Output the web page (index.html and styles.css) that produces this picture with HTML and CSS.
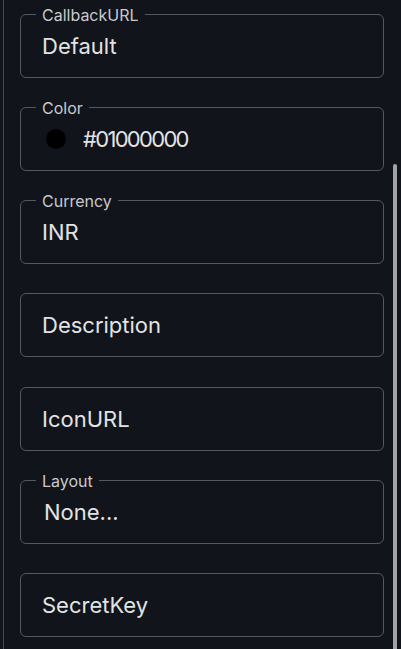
FILE: index.html
```html
<!DOCTYPE html>
<html lang="en">
<head>
  <meta charset="UTF-8" />
  <meta name="viewport" content="width=device-width, initial-scale=1.0"/>
  <title>Settings</title>
  <link rel="stylesheet" href="styles.css">
</head>
<body>
  <div class="panel">
    <div class="fields">
      <div class="field">
        <span class="label">CallbackURL</span>
        <span class="value">Default</span>
      </div>
      <div class="field">
        <span class="label">Color</span>
        <span class="swatch"></span>
        <span class="value hex">#01000000</span>
      </div>
      <div class="field">
        <span class="label">Currency</span>
        <span class="value">INR</span>
      </div>
      <div class="field">
        <span class="value">Description</span>
      </div>
      <div class="field">
        <span class="value">IconURL</span>
      </div>
      <div class="field select">
        <span class="label">Layout</span>
        <span class="value">None...</span>
      </div>
      <div class="field">
        <span class="value">SecretKey</span>
      </div>
    </div>
    <div class="track">
      <div class="thumb"></div>
    </div>
  </div>
</body>
</html>
```

FILE: styles.css
```css
* {
  margin: 0;
  padding: 0;
  box-sizing: border-box;
  font-family: Inter, 'Noto Sans', sans-serif;
}
html, body {
  height: 100%;
  overflow: hidden;
}
body {
  background: #11141b;
}
.panel {
  display: flex;
  height: 100%;
  margin-left: 3px;
  border-left: 1px solid #45474c;
}
.fields {
  width: 380px;
  padding: 14px 0 0 16px;
  display: flex;
  flex-direction: column;
  gap: 29.17px;
}
.field {
  position: relative;
  flex: none;
  height: 64px;
  border: 1px solid #55585d;
  border-radius: 6px;
  display: flex;
  align-items: center;
  padding-left: 21px;
}
.label {
  position: absolute;
  top: -10px;
  left: 15px;
  padding: 0 6px;
  background: #11141b;
  color: #c9cacc;
  font-size: 16px;
  line-height: 20px;
}
.value {
  color: #e2e3e4;
  font-size: 22px;
  line-height: 26px;
}
.hex {
  letter-spacing: -1.7px;
}
.select .value {
  margin-left: 2px;
}
.swatch {
  flex: none;
  width: 20px;
  height: 20px;
  border-radius: 50%;
  background: #000;
  margin: 0 17px 0 4px;
}
.track {
  width: 4px;
  margin-left: 9px;
}
.thumb {
  margin-top: 164px;
  height: 500px;
  background: #a3a3a5;
  border-radius: 2px 2px 0 0;
}
```
